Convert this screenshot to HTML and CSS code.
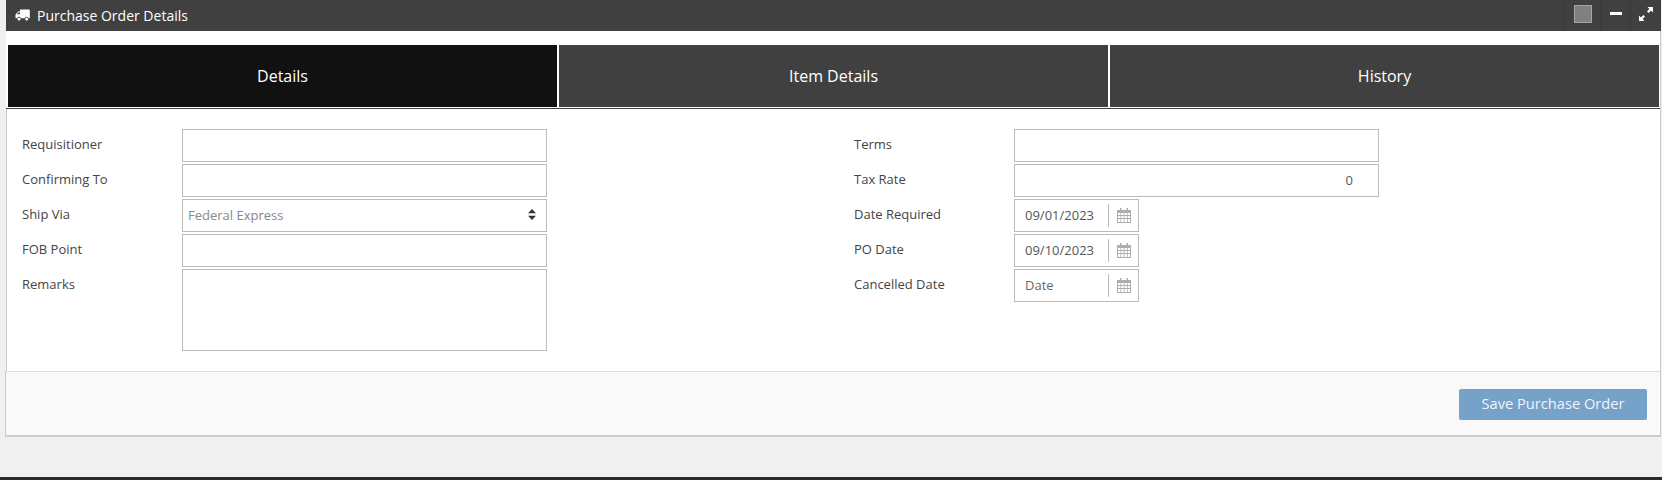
FILE: index.html
```html
<!DOCTYPE html>
<html lang="en">
<head>
<meta charset="utf-8">
<title>Purchase Order Details</title>
<link rel="stylesheet" href="styles.css">
</head>
<body>
<div class="page">
  <section class="panel">
    <header class="panel-head">
      <div class="panel-title">
        <svg class="truck" viewBox="0 0 15 12" width="15" height="12"><path fill="#fff" d="M5 0.500h8.800c.6 0 1 .4 1 1v7.700h-1.200a2 2 0 0 0-3.800 0H6a2 2 0 0 0-3.800 0H.5V5.600L3.600 2.200H5zM1.900 5.300h3V3.200H3.800z"/><circle fill="#fff" cx="4.100" cy="10" r="1.500"/><circle fill="#fff" cx="11.700" cy="10" r="1.500"/></svg>
        <span>Purchase Order Details</span>
      </div>
      <div class="panel-tools">
        <div class="tool tool-color"><span class="swatch"></span></div>
        <div class="tool tool-min"><span class="minus"></span></div>
        <div class="tool tool-max">
          <svg viewBox="0 0 14 14" width="14" height="14"><path fill="#fff" d="M8.500 0H14v5.500L12 3.600 9.600 6 8 4.400 10.400 2zM5.500 14H0V8.500L2 10.400 4.400 8 6 9.600 3.600 12z"/></svg>
        </div>
      </div>
    </header>
    <nav class="tabs">
      <a class="tab tab-active">Details</a>
      <a class="tab">Item Details</a>
      <a class="tab">History</a>
    </nav>
    <form class="form">
      <div class="col">
        <div class="row"><label>Requisitioner</label><input class="field" type="text"></div>
        <div class="row"><label>Confirming To</label><input class="field" type="text"></div>
        <div class="row">
          <label>Ship Via</label>
          <div class="select-wrap">
            <select class="field select"><option>Federal Express</option></select>
            <svg class="updown" viewBox="0 0 8 11" width="8" height="11"><path fill="#333" d="M4 0l4 4.300H0zM4 11L0 6.700h8z"/></svg>
          </div>
        </div>
        <div class="row"><label>FOB Point</label><input class="field" type="text"></div>
        <div class="row"><label>Remarks</label><textarea class="field area"></textarea></div>
      </div>
      <div class="col">
        <div class="row"><label>Terms</label><input class="field" type="text"></div>
        <div class="row"><label>Tax Rate</label><input class="field num" type="text" value="0"></div>
        <div class="row">
          <label>Date Required</label>
          <div class="date"><input class="date-input" type="text" value="09/01/2023"><span class="date-btn"><svg width="14" height="15"><use href="#cal"/></svg></span></div>
        </div>
        <div class="row">
          <label>PO Date</label>
          <div class="date"><input class="date-input" type="text" value="09/10/2023"><span class="date-btn"><svg width="14" height="15"><use href="#cal"/></svg></span></div>
        </div>
        <div class="row">
          <label>Cancelled Date</label>
          <div class="date"><input class="date-input" type="text" placeholder="Date"><span class="date-btn"><svg width="14" height="15"><use href="#cal"/></svg></span></div>
        </div>
      </div>
    </form>
    <footer class="panel-foot">
      <button class="save" type="button">Save Purchase Order</button>
    </footer>
  </section>
  <div class="bottom-bar"></div>
</div>
<svg class="defs" width="0" height="0">
  <symbol id="cal" viewBox="0 0 14 15">
    <path fill="#adadad" fill-rule="evenodd" d="M3 0h1.500v2h5V0H11v2h3v13H0V2h3zM1 5v2h2.500V5zm3.250 0v2h2.500V5zm3.250 0v2h2.500V5zm3.250 0v2H13V5zM1 8v2h2.500V8zm3.250 0v2h2.500V8zm3.250 0v2h2.500V8zm3.250 0v2H13V8zM1 11v3h2.500v-3zm3.250 0v3h2.500v-3zm3.250 0v3h2.500v-3zm3.250 0v3H13v-3z"/>
  </symbol>
</svg>
</body>
</html>
```
FILE: styles.css
```css
* { box-sizing: border-box; }
html, body { margin: 0; height: 480px; overflow: hidden; }
body {
  background: #f0f0f0;
  font-family: "Open Sans", "Liberation Sans", sans-serif;
  font-size: 13px;
  color: #444;
}
.page {
  height: 480px;
  display: flex;
  flex-direction: column;
  justify-content: space-between;
}
.panel {
  margin: 0 1px 0 6px;
  background: #fff;
  border-right: 1px solid #ccc;
  height: 437px;
}
.panel-head {
  height: 31px;
  background: #404040;
  color: #fff;
  display: flex;
  justify-content: space-between;
  align-items: stretch;
  margin-right: -1px;
}
.panel-title {
  display: flex;
  align-items: center;
  gap: 7px;
  padding: 0 0 1px 9px;
  font-size: 14px;
}
.truck { display: block; }
.panel-tools { display: flex; }
.tool {
  display: flex;
  align-items: center;
  justify-content: center;
  border-left: 1px solid #3a3a3a;
}
.tool-color { width: 36px; }
.tool-min { width: 30px; }
.tool-max { width: 31px; }
.swatch {
  display: block;
  width: 18px;
  height: 18px;
  background: #808080;
  border: 1px solid #a6a6a6;
  margin-top: -3px;
}
.minus {
  display: block;
  width: 12px;
  height: 3px;
  background: #fff;
  margin-top: -4px;
}
.tool-max svg { display: block; margin-top: -3px; }
.tabs {
  display: flex;
  gap: 2px;
  margin-top: 14px;
  padding: 0 1px 1px 2px;
  border-bottom: 1px solid #404040;
  height: 64px;
}
.tab {
  flex: 1 1 0;
  background: #404040;
  color: #fff;
  font-size: 16px;
  display: flex;
  align-items: center;
  justify-content: center;
}
.tab-active { background: #111; }
.form {
  display: grid;
  grid-template-columns: 832px 1fr;
  padding: 20px 0 20px 15px;
  height: 262px;
  border-left: 1px solid #ccc;
}
.col { display: flex; flex-direction: column; gap: 2px; }
.row { display: flex; align-items: flex-start; }
.row label {
  width: 160px;
  flex: none;
  padding-top: 6px;
  line-height: 18px;
  color: #444;
}
.field {
  display: block;
  width: 365px;
  height: 33px;
  border: 1px solid #bbb;
  background: #fff;
  font: inherit;
  color: #555;
  border-radius: 0;
  outline: none;
  margin: 0;
}
.area { height: 82px; resize: none; }
.num { text-align: right; padding: 0 25px 2px 0; }
.select-wrap { position: relative; width: 365px; }
.select {
  appearance: none;
  -webkit-appearance: none;
  padding: 0 0 2px 5px;
  color: #888;
}
.updown { position: absolute; right: 11px; top: 10px; }
.date {
  width: 125px;
  height: 33px;
  border: 1px solid #bbb;
  display: flex;
  align-items: center;
}
.date-input {
  width: 94px;
  height: 23px;
  border: 0;
  border-right: 1px solid #bbb;
  padding: 0 0 2px 10px;
  font: inherit;
  color: #555;
  outline: none;
}
.date-input::placeholder { color: #666; opacity: 1; }
.date-btn { flex: 1; display: flex; justify-content: center; margin-top: -1px; }
.date-btn svg { display: block; }
.panel-foot {
  height: 66px;
  margin-left: -1px;
  background: #f9f9f9;
  border-top: 1px solid #ddd;
  border-left: 1px solid #ccc;
  border-bottom: 2px solid #ccc;
  display: flex;
  justify-content: flex-end;
  align-items: flex-start;
  padding: 17px 13px 0 0;
}
.save {
  width: 188px;
  height: 31px;
  background: #76a1c8;
  border: 0;
  border-radius: 2px;
  color: #f0f5fa;
  font: 14.67px "Open Sans", "Liberation Sans", sans-serif;
  padding: 0 0 3px;
}
.bottom-bar { height: 3px; background: #2b2b2b; }
.defs { position: absolute; }
```
